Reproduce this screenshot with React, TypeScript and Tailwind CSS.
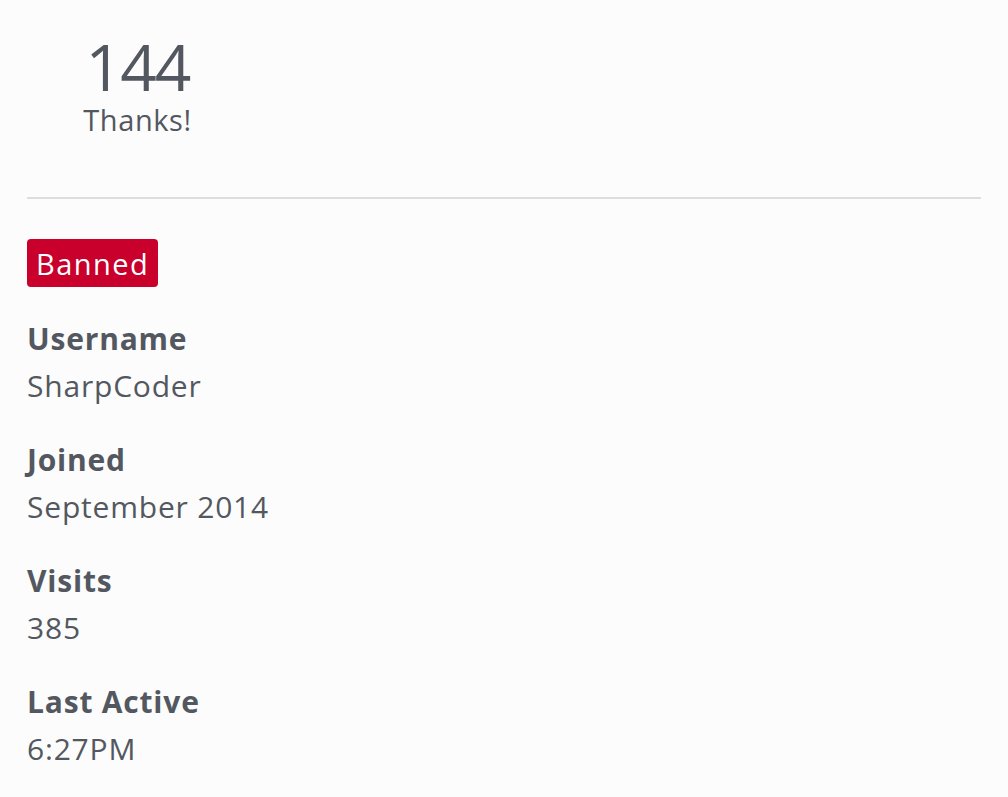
import React from "react";

const items = [
  { label: "Username", value: "SharpCoder" },
  { label: "Joined", value: "September 2014" },
  { label: "Visits", value: "385" },
  { label: "Last Active", value: "6:27PM" },
];

export default function App() {
  return (
    <div className="min-h-screen bg-[#fcfcfc] px-[27px] text-[#535860] font-['Open_Sans',sans-serif]">
      <div className="flex w-[221px] flex-col items-center pt-[38px]">
        <div className="text-[64px] leading-[58px] tracking-[-2px]">144</div>
        <div className="text-[29px] leading-[47px] tracking-[0.6px]">Thanks!</div>
      </div>
      <div className="mt-[54px] h-[2px] bg-[#dddddd]" />
      <div className="mt-[40px] flex">
        <span className="inline-flex h-[48px] items-center rounded-[4px] bg-[#c8002b] px-[9px] text-[29px] leading-[47px] tracking-[0.05em] text-white">
          Banned
        </span>
      </div>
      <dl className="mt-[28px] tracking-[0.05em]">
        {items.map((it) => (
          <div key={it.label} className="mb-[27px]">
            <dt className="text-[30px] font-bold leading-[47px]">{it.label}</dt>
            <dd className="text-[30px] leading-[47px]">{it.value}</dd>
          </div>
        ))}
      </dl>
    </div>
  );
}
